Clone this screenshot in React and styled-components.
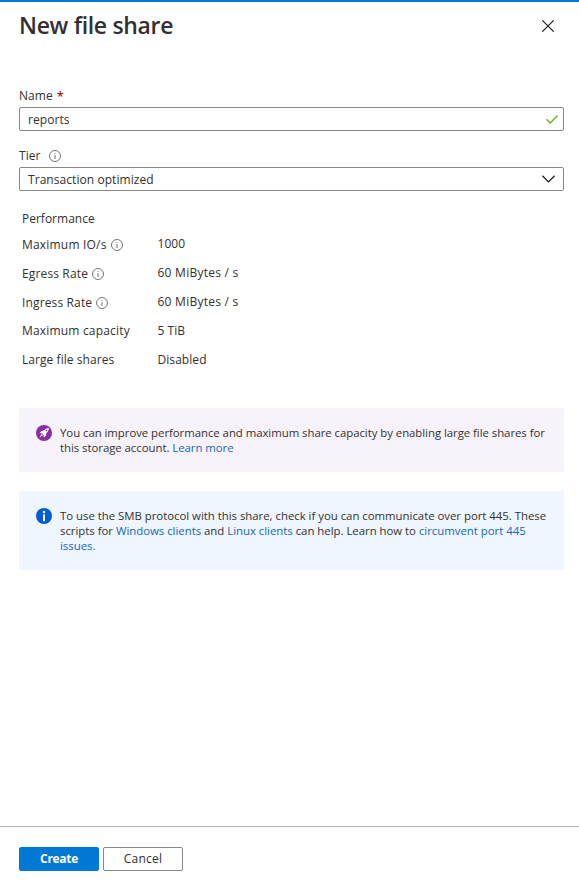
import React from "react";
import styled, { createGlobalStyle } from "styled-components";

const GlobalStyle = createGlobalStyle`
  * { box-sizing: border-box; }
  body {
    margin: 0;
    background: #fff;
    color: #323130;
    font-family: "Open Sans", "Segoe UI", sans-serif;
    font-size: 12px;
    letter-spacing: 0.06px;
    line-height: 16px;
  }
`;

const Panel = styled.main`
  display: flex;
  flex-direction: column;
  height: 885px;
  border-top: 2px solid #0078d4;
`;

const Header = styled.header`
  display: flex;
  justify-content: space-between;
  padding: 8px 24px 0 19px;
`;

const Title = styled.h1`
  margin: -1px 0 1px;
  font-size: 23px;
  font-weight: 550;
  line-height: 32px;
  letter-spacing: -0.33px;
`;

const IconButton = styled.button`
  display: flex;
  align-items: center;
  justify-content: center;
  width: 14px;
  height: 32px;
  padding: 0;
  border: 0;
  background: none;
`;

const Content = styled.section`
  flex: 1;
  padding: 45px 15px 0 19px;
`;

const Field = styled.div`
  margin-bottom: 16px;
`;

const Label = styled.label`
  display: flex;
  align-items: center;
  height: 16px;
  margin-bottom: 4px;
  padding-top: 2px;
  gap: ${(p) => p.$gap}px;
`;

const Required = styled.span`
  color: #a4262c;
  font-size: 13px;
  font-weight: 600;
`;

const Control = styled.div`
  display: flex;
  align-items: center;
  justify-content: space-between;
  height: 24px;
  padding: 0 ${(p) => p.$end}px 0 8px;
  border: 1px solid #8a8886;
  border-radius: 2px;
`;

const ControlText = styled.span`
  padding-top: 2px;
`;

const Facts = styled.dl`
  display: grid;
  grid-template-columns: 135.5px 1fr;
  row-gap: 13px;
  margin: 10px 0 0;
  padding-left: 3px;
`;

const FactsTitle = styled.h2`
  margin: 20px 0 0;
  padding-left: 3px;
  font-size: 12px;
  font-weight: 400;
  letter-spacing: 0;
`;

const FactName = styled.dt`
  display: flex;
  align-items: center;
  gap: 4px;
  height: 16px;
  margin-top: ${(p) => (p.$info ? 0 : -1)}px;
  letter-spacing: ${(p) => p.$spacing || 0.06}px;
`;

const FactValue = styled.dd`
  margin: -1px 0 0;
  height: 17px;
  letter-spacing: ${(p) => p.$spacing || 0.06}px;
`;

const Notice = styled.div`
  display: flex;
  gap: 8px;
  height: ${(p) => p.$height}px;
  margin-top: ${(p) => p.$top}px;
  padding: 17px 0 0 17px;
  border-radius: 2px;
  background: ${(p) => p.$background};
`;

const NoticeText = styled.p`
  margin: 0;
  font-size: 11.4px;
  line-height: 15px;
  letter-spacing: ${(p) => p.$spacing}px;
  white-space: nowrap;
`;

const Link = styled.a`
  color: #1068bf;
`;

const Footer = styled.footer`
  display: flex;
  gap: 4px;
  height: 59px;
  padding: 20px 19px 0;
  border-top: 1px solid #b5b3b2;
`;

const Button = styled.button`
  width: 80px;
  height: 24px;
  padding: 0 0 1px;
  border: 1px solid ${(p) => (p.$primary ? "#0078d4" : "#8a8886")};
  border-radius: 2px;
  background: ${(p) => (p.$primary ? "#0078d4" : "#fff")};
  color: ${(p) => (p.$primary ? "#fff" : "#323130")};
  font: inherit;
  font-weight: ${(p) => (p.$primary ? 700 : 400)};
  letter-spacing: ${(p) => (p.$primary ? -0.3 : 0.25)}px;
`;

const Icon = styled.svg`
  display: block;
  flex: none;
`;

const InfoIcon = () => (
  <Icon width="12" height="12" viewBox="0 0 12 12" fill="none" stroke="#706e6c">
    <circle cx="6" cy="6" r="5.5" strokeWidth="0.95" />
    <path d="M6 5v4M6 3v1" strokeWidth="1" />
  </Icon>
);

const CloseIcon = () => (
  <Icon width="12" height="12" viewBox="0 0 12 12" fill="none" stroke="#1b1a19" strokeWidth="1.15">
    <path d="M0.3 0.3L11.7 11.7M11.7 0.3L0.3 11.7" />
  </Icon>
);

const CheckIcon = () => (
  <Icon width="12" height="9" viewBox="0 0 12 9" fill="none" stroke="#6bb024" strokeWidth="1.3">
    <path d="M0.4 4.3L4.2 8L11.6 0.5" />
  </Icon>
);

const ChevronIcon = () => (
  <Icon width="13" height="8" viewBox="0 0 13 8" fill="none" stroke="#1b1a19" strokeWidth="1.25">
    <path d="M0.4 0.8L6.5 6.9L12.6 0.8" />
  </Icon>
);

const RocketIcon = () => (
  <Icon width="16" height="16" viewBox="0 0 16 16">
    <circle cx="8" cy="8" r="8" fill="#8a2da5" />
    <path
      fill="#fff"
      d="M12.9 3.1C10.8 3.2 9.3 3.9 7.9 5.6L5.4 6L3.6 8.2L5.8 8.3L7.7 10.2L7.8 12.4L10 10.6L10.4 8.1C12.1 6.7 12.8 5.2 12.9 3.1Z"
    />
    <path d="M5.7 9.1L3.5 12.5L6.9 10.3Z" fill="#fff" />
    <circle cx="10.4" cy="5.6" r="0.8" fill="#8a2da5" />
  </Icon>
);

const SolidInfoIcon = () => (
  <Icon width="16" height="16" viewBox="0 0 16 16">
    <circle cx="8" cy="8" r="8" fill="#015cda" />
    <rect x="7" y="6.3" width="2" height="6.9" fill="#fff" />
    <circle cx="8" cy="4" r="1.3" fill="#fff" />
  </Icon>
);

const facts = [
  { name: "Maximum IO/s", value: "1000", info: true, spacing: 0.19 },
  { name: "Egress Rate", value: "60 MiBytes / s", info: true, spacing: 0.14, valueSpacing: 0.25 },
  { name: "Ingress Rate", value: "60 MiBytes / s", info: true, spacing: 0.14, valueSpacing: 0.25 },
  { name: "Maximum capacity", value: "5 TiB", spacing: 0.18 },
  { name: "Large file shares", value: "Disabled" },
];

export default function App() {
  return (
    <Panel>
      <GlobalStyle />
      <Header>
        <Title>New file share</Title>
        <IconButton aria-label="Close">
          <CloseIcon />
        </IconButton>
      </Header>
      <Content>
        <Field>
          <Label $gap={4}>
            Name <Required>*</Required>
          </Label>
          <Control $end={5}>
            <ControlText>reports</ControlText>
            <CheckIcon />
          </Control>
        </Field>
        <Field>
          <Label $gap={8}>
            Tier <InfoIcon />
          </Label>
          <Control $end={8}>
            <ControlText>Transaction optimized</ControlText>
            <ChevronIcon />
          </Control>
        </Field>
        <FactsTitle>Performance</FactsTitle>
        <Facts>
          {facts.map((fact) => (
            <React.Fragment key={fact.name}>
              <FactName $info={fact.info} $spacing={fact.spacing}>
                {fact.name}
                {fact.info && <InfoIcon />}
              </FactName>
              <FactValue $spacing={fact.valueSpacing}>{fact.value}</FactValue>
            </React.Fragment>
          ))}
        </Facts>
        <Notice $height={64} $top={39} $background="#f8f3fb">
          <RocketIcon />
          <NoticeText $spacing={-0.045}>
            You can improve performance and maximum share capacity by enabling large file shares for
            <br />
            this storage account. <Link>Learn more</Link>
          </NoticeText>
        </Notice>
        <Notice $height={79} $top={19} $background="#eff6ff">
          <SolidInfoIcon />
          <NoticeText $spacing={-0.02}>
            To use the SMB protocol with this share, check if you can communicate over port 445. These
            <br />
            scripts for <Link>Windows clients</Link> and <Link>Linux clients</Link> can help. Learn how to{" "}
            <Link>circumvent port 445</Link>
            <br />
            <Link>issues.</Link>
          </NoticeText>
        </Notice>
      </Content>
      <Footer>
        <Button $primary>Create</Button>
        <Button>Cancel</Button>
      </Footer>
    </Panel>
  );
}
